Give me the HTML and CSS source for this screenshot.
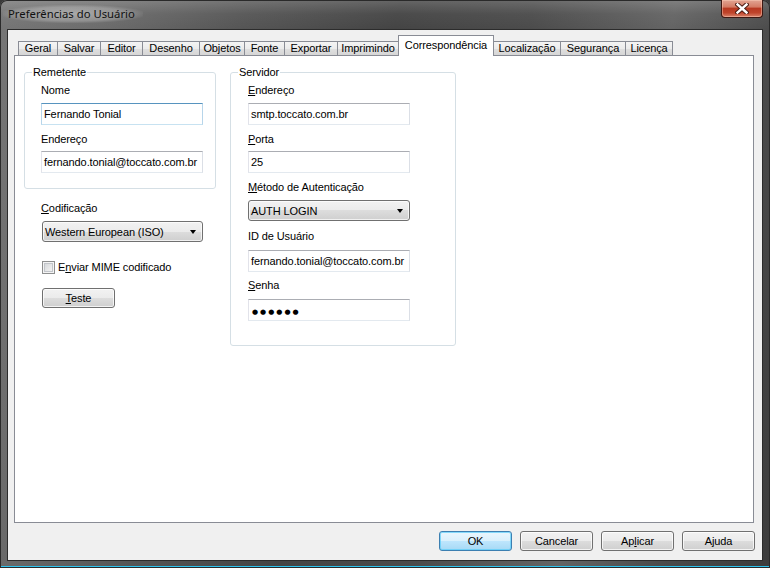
FILE: index.html
```html
<!DOCTYPE html>
<html lang="pt-BR">
<head>
<meta charset="utf-8">
<title>Preferências do Usuário</title>
<link rel="stylesheet" href="styles.css">
</head>
<body>
<div class="window">
  <div class="titlebar">
    <span class="title">Preferências do Usuário</span>
    <div class="close">
      <svg width="14" height="11" viewBox="0 0 14 11">
        <path d="M2.5 1.5 L11.5 9.5 M11.5 1.5 L2.5 9.5" stroke="#4a1c14" stroke-width="4.4" stroke-linecap="square" fill="none"/>
        <path d="M2.5 1.5 L11.5 9.5 M11.5 1.5 L2.5 9.5" stroke="#ffffff" stroke-width="2.4" stroke-linecap="square" fill="none"/>
      </svg>
    </div>
  </div>
  <div class="client">
    <div class="tabstrip">
      <div class="tab t-geral">Geral</div>
      <div class="tab t-salvar">Salvar</div>
      <div class="tab t-editor">Editor</div>
      <div class="tab t-desenho">Desenho</div>
      <div class="tab t-objetos">Objetos</div>
      <div class="tab t-fonte">Fonte</div>
      <div class="tab t-exportar">Exportar</div>
      <div class="tab t-imprimindo">Imprimindo</div>
      <div class="tab selected t-corr">Correspondência</div>
      <div class="tab t-loc">Localização</div>
      <div class="tab t-seg">Segurança</div>
      <div class="tab t-lic">Licença</div>
    </div>
    <div class="panel">
      <div class="col-left">
        <fieldset class="group group-left">
          <legend>Remetente</legend>
          <div class="group-body body-left">
            <div class="lbl first">Nome</div>
            <div class="field focused">Fernando Tonial</div>
            <div class="lbl">Endereço</div>
            <div class="field after">fernando.tonial@toccato.com.br</div>
          </div>
        </fieldset>
        <div class="lbl cod-label"><u>C</u>odificação</div>
        <div class="combo combo-left"><span>Western European (ISO)</span><span class="arrow"></span></div>
        <div class="check-row">
          <span class="checkbox"></span>
          <span>E<u>n</u>viar MIME codificado</span>
        </div>
        <div class="btn btn-teste"><u>T</u>este</div>
      </div>
      <div class="col-right">
        <fieldset class="group group-right">
          <legend>Servidor</legend>
          <div class="group-body body-right">
            <div class="lbl first"><u>E</u>ndereço</div>
            <div class="field">smtp.toccato.com.br</div>
            <div class="lbl"><u>P</u>orta</div>
            <div class="field after">25</div>
            <div class="lbl"><u>M</u>étodo de Autenticação</div>
            <div class="combo"><span>AUTH LOGIN</span><span class="arrow"></span></div>
            <div class="lbl lbl-id">ID de Usuário</div>
            <div class="field field-id">fernando.tonial@toccato.com.br</div>
            <div class="lbl lbl-senha"><u>S</u>enha</div>
            <div class="field field-senha"><span class="dots">●●●●●●</span></div>
          </div>
        </fieldset>
      </div>
    </div>
    <div class="buttons">
      <div class="btn default">OK</div>
      <div class="btn">Cancelar</div>
      <div class="btn">Ap<u>l</u>icar</div>
      <div class="btn">Ajuda</div>
    </div>
  </div>
</div>
</body>
</html>
```

FILE: styles.css
```css
* { box-sizing: border-box; }

html, body {
  margin: 0;
  padding: 0;
  background: #3a3a3a;
}

body {
  font-family: "Liberation Sans", Arial, sans-serif;
  font-size: 11px;
  letter-spacing: -0.1px;
  color: #000;
}

.window {
  width: 770px;
  height: 568px;
  display: flex;
  flex-direction: column;
  border-radius: 7px 7px 0 0;
  overflow: hidden;
  background:
    linear-gradient(180deg, rgba(255,255,255,0.18) 0, rgba(255,255,255,0.04) 14px, rgba(255,255,255,0) 29px),
    linear-gradient(102deg, #767676 0%, #6c6c6c 12%, #555555 28%, #444444 45%, #4b4b4b 60%, #646464 76%, #4a4a4a 88%, #3c3c3c 100%);
  box-shadow: inset 0 0 0 1px #2a2a2a, inset 0 -1px 0 #1c1c1c, inset 0 -2px 0 #2ec4ef;
}

.titlebar {
  height: 29px;
  flex: none;
  display: flex;
  justify-content: space-between;
  align-items: flex-start;
}

.title {
  margin: 5px 0 0 3px;
  padding: 1px 8px 2px 5px;
  font-family: "Noto Sans", "Liberation Sans", sans-serif;
  font-size: 11.3px;
  letter-spacing: 0;
  line-height: 15px;
  color: #111;
  background: radial-gradient(ellipse at center, rgba(255,255,255,0.38) 0%, rgba(255,255,255,0.22) 55%, rgba(255,255,255,0) 75%);
}

.close {
  width: 42px;
  height: 18px;
  margin: 0 7px 0 0;
  display: flex;
  align-items: center;
  justify-content: center;
  border: 1px solid #3e1812;
  border-top: none;
  border-radius: 0 0 4px 4px;
  background: linear-gradient(180deg, #e2a593 0%, #d57d66 40%, #b83a22 50%, #c0442b 75%, #d9826a 100%);
  box-shadow: inset 0 0 0 1px rgba(255,210,190,0.45);
}

.client {
  flex: 1;
  margin: 0 7px 7px 7px;
  border: 1px solid #2c2c2c;
  background: #f0f0f0;
  padding: 5px 8px 0 6px;
  display: flex;
  flex-direction: column;
}

/* Tabs */
.tabstrip {
  height: 21px;
  display: flex;
  align-items: flex-end;
  padding-left: 4px;
  margin-bottom: -1px;
  position: relative;
  z-index: 1;
}

.tab {
  height: 14px;
  margin-bottom: 1px;
  margin-left: -1px;
  border: 1px solid #898c95;
  border-bottom: none;
  background: linear-gradient(180deg, #f4f4f4 0%, #ececec 50%, #e0e0e0 50%, #d6d6d6 100%);
  text-align: center;
  line-height: 13px;
  white-space: nowrap;
}

.tab:first-child { margin-left: 0; }

.tab.selected {
  height: 21px;
  margin-bottom: 0;
  background: #ffffff;
  line-height: 19px;
}

.t-geral { width: 40px; }
.t-salvar { width: 44px; }
.t-editor { width: 43px; }
.t-desenho { width: 58px; }
.t-objetos { width: 46px; }
.t-fonte { width: 41px; }
.t-exportar { width: 54px; }
.t-imprimindo { width: 62px; }
.t-corr { width: 96px; }
.t-loc { width: 68px; }
.t-seg { width: 66px; }
.t-lic { width: 48px; }

/* Panel */
.panel {
  height: 468px;
  flex: none;
  border: 1px solid #898c95;
  background: #ffffff;
  padding: 10px 0 0 9px;
  display: flex;
  align-items: flex-start;
}

.col-left {
  width: 192px;
  display: flex;
  flex-direction: column;
}

.col-right {
  width: 226px;
  margin-left: 14px;
}

.group {
  margin: 0;
  padding: 0 0 15px 7px;
  border: 1px solid #d5dfe5;
  border-radius: 3px;
  min-width: 0;
}

.group-right { padding-bottom: 24px; }

.group legend {
  margin: 0;
  padding: 0 1px;
  font-size: 11px;
  line-height: 13px;
}

.body-left { padding-left: 9px; }
.body-right { padding-left: 10px; }

.lbl {
  line-height: 13px;
  margin-top: 8px;
  white-space: nowrap;
}

.lbl.first { margin-top: 5px; }

.field {
  width: 162px;
  height: 22px;
  margin-top: 6px;
  border: 1px solid #abadb3;
  border-left-color: #e2e3ea;
  border-right-color: #dbdfe6;
  border-bottom-color: #e3e9ef;
  background: #ffffff;
  padding: 0 2px;
  line-height: 20px;
  white-space: nowrap;
  overflow: hidden;
}

.field.after { margin-top: 5px; }

.field.focused {
  border-color: #5794bf;
  border-left-color: #b7d5ea;
  border-right-color: #b7d5ea;
  border-bottom-color: #c7e2f1;
}

.combo {
  width: 162px;
  height: 21px;
  margin-top: 6px;
  border: 1px solid #707070;
  border-radius: 3px;
  background: linear-gradient(180deg, #f2f2f2 0%, #ebebeb 50%, #dddddd 50%, #cfcfcf 100%);
  box-shadow: inset 0 0 0 1px rgba(255,255,255,0.7);
  display: flex;
  align-items: center;
  justify-content: space-between;
  padding: 0 6px 0 2px;
  white-space: nowrap;
}

.arrow {
  width: 0;
  height: 0;
  border-left: 3.5px solid transparent;
  border-right: 3.5px solid transparent;
  border-top: 4px solid #000;
}

.cod-label { margin-top: 13px; margin-left: 17px; }

.combo-left { margin-left: 18px; width: 161px; }

.check-row {
  margin-top: 19px;
  margin-left: 18px;
  height: 13px;
  display: flex;
  align-items: center;
  gap: 3px;
  line-height: 13px;
  white-space: nowrap;
}

.checkbox {
  width: 13px;
  height: 13px;
  flex: none;
  border: 1px solid #8e8f8f;
  background: linear-gradient(135deg, #cfd2d6 0%, #eeeeee 70%, #f6f6f6 100%);
  box-shadow: inset 0 0 0 1px #f4f4f4, inset 0 0 0 2px #c2c5ca;
}

.btn {
  width: 73px;
  height: 20px;
  border: 1px solid #707070;
  border-radius: 3px;
  background: linear-gradient(180deg, #f2f2f2 0%, #ebebeb 50%, #dddddd 50%, #cfcfcf 100%);
  box-shadow: inset 0 0 0 1px rgba(255,255,255,0.75);
  text-align: center;
  line-height: 18px;
  white-space: nowrap;
}

.btn-teste { margin-top: 14px; margin-left: 18px; }

.lbl-id { margin-top: 9px; }
.field-id { margin-top: 7px; }
.lbl-senha { margin-top: 7px; }
.field-senha { margin-top: 7px; }

.dots {
  font-family: "DejaVu Sans", sans-serif;
  font-size: 7px;
  letter-spacing: 2px;
  padding-left: 1px;
}

.buttons {
  margin-top: 8px;
  margin-right: -1px;
  display: flex;
  justify-content: flex-end;
  gap: 8px;
}

.btn.default {
  border-color: #3c7fb1;
  background: linear-gradient(180deg, #eaf6fd 0%, #d9f0fc 50%, #bee6fd 50%, #a7d9f5 100%);
  box-shadow: inset 0 0 0 1px rgba(90,205,250,0.7);
}
```
